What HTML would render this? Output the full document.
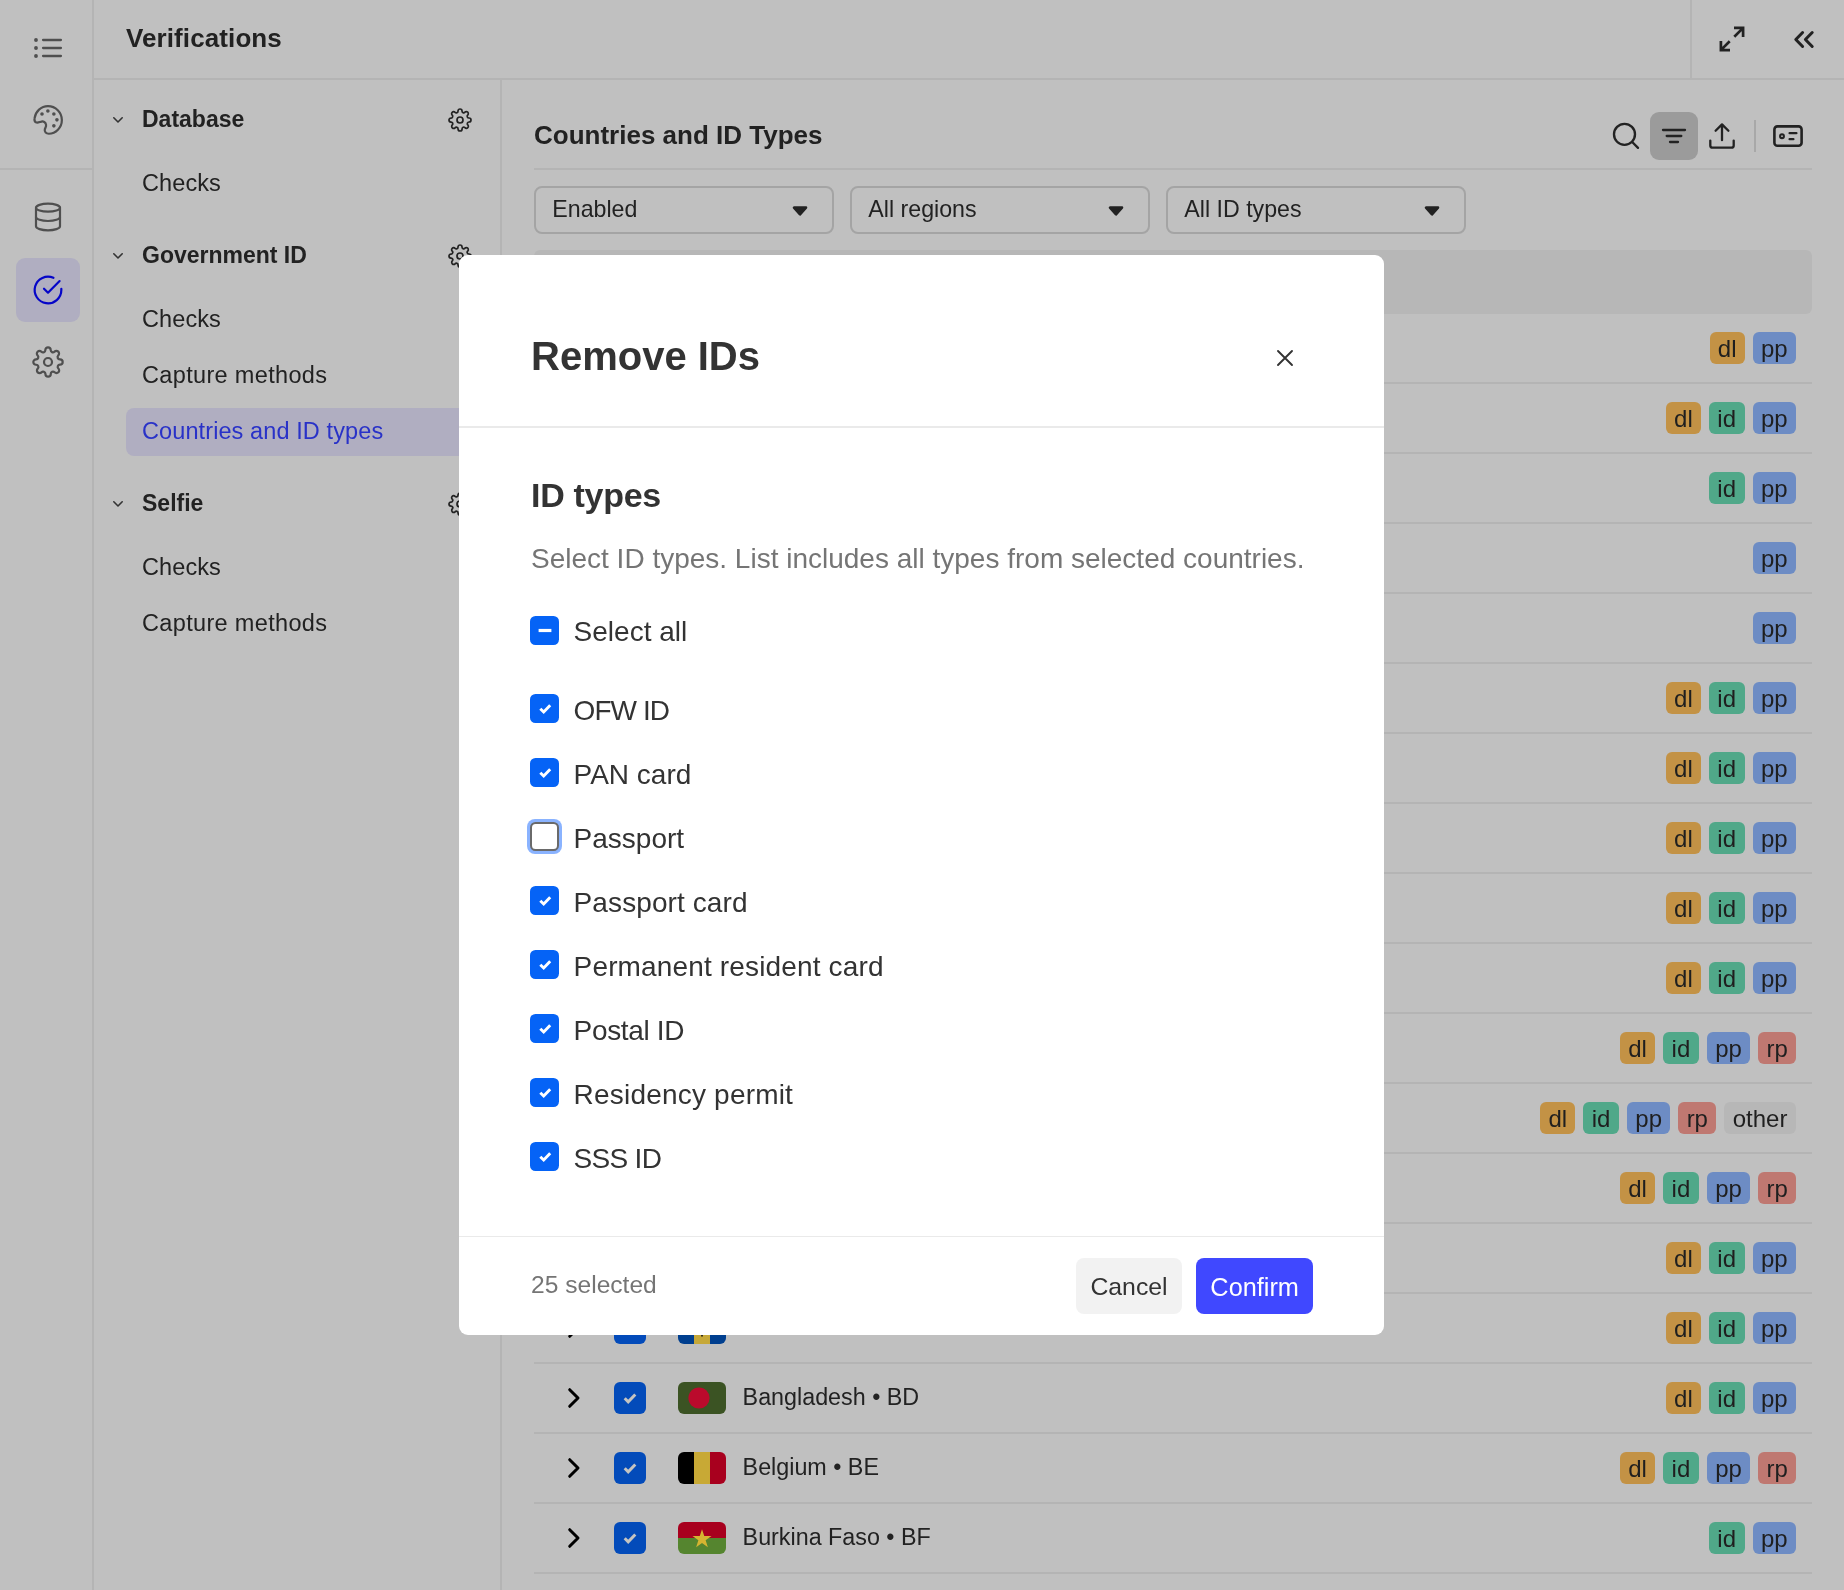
<!DOCTYPE html>
<html lang="en">
<head>
<meta charset="utf-8">
<title>Verifications</title>
<style>
*{box-sizing:border-box;margin:0;padding:0}
html,body{width:1844px;height:1590px;overflow:hidden;background:#c0c0c0}
body{font-family:"Liberation Sans",sans-serif;color:#222;position:relative}
#app{position:absolute;left:0;top:0;width:1844px;height:1590px;overflow:hidden;will-change:transform}
.abs{position:absolute}
.ln{position:absolute;background:#b4b4b4}
svg{display:block;overflow:visible}
.ico{position:absolute;fill:none;stroke:#4f4f4f;stroke-width:1.65;stroke-linecap:round;stroke-linejoin:round}
.t{position:absolute;white-space:nowrap;line-height:1}
/* nav */
.navh{font-weight:700;font-size:23px;left:142px}
.navi{font-size:23.5px;left:142px}
.chev{position:absolute;left:113px;width:10px;height:6px;fill:none;stroke:#333;stroke-width:1.6;stroke-linecap:round;stroke-linejoin:round}
.gear{position:absolute;left:448px;width:24px;height:24px;fill:none;stroke:#222;stroke-width:1.7;stroke-linecap:round;stroke-linejoin:round}
/* table */
.row{position:absolute;left:534px;width:1278px;height:70px;border-bottom:2px solid #b4b4b4}
.row .rc{position:absolute;left:34px;top:24px;width:12px;height:20px;fill:none;stroke:#000;stroke-width:3;stroke-linecap:round;stroke-linejoin:round}
.row .cb{position:absolute;left:80px;top:18px;width:32px;height:32px;border-radius:6px;background:#034bba}
.row .cb svg{position:absolute;left:0;top:0;width:32px;height:32px;fill:none;stroke:#c5c4c1;stroke-width:3;stroke-linecap:butt;stroke-linejoin:miter}
.row .fl{position:absolute;left:144px;top:18px;width:48px;height:32px;border-radius:6px;overflow:hidden}
.row .nm{position:absolute;left:208.6px;top:20px;font-size:23.3px;line-height:26px;white-space:nowrap;color:#222}
.tags{position:absolute;right:16px;top:18px;height:32px;display:flex;gap:8px}
.tg{height:32px;border-radius:6px;font-size:24px;line-height:33px;text-align:center;color:#1f1f1f}
.dl{width:34.8px;background:#c39245}
.id{width:35.8px;background:#50a889}
.pp{width:43.4px;background:#6d8cc4}
.rp{width:37.8px;background:#bf7871}
.ot{width:71.8px;background:#b7b7b7}
/* dropdown */
.dd{position:absolute;top:186px;width:300px;height:48px;border:2px solid #a4a4a4;border-radius:8px}
.dd span{position:absolute;left:16.3px;top:7.5px;font-size:23.2px;line-height:26px;color:#222}
.dd svg{position:absolute;right:24px;top:17.8px;width:16px;height:10px;fill:#222;stroke:#222;stroke-width:2.6;stroke-linejoin:round}
/* modal */
#modal{position:absolute;left:459px;top:254.8px;width:925.2px;height:1080.1px;background:#fff;border-radius:9px}
.mcb{position:absolute;left:71.4px;width:28.6px;height:28.6px;border-radius:5.5px;background:#0563f6}
.mcb svg{position:absolute;left:.3px;top:.3px;width:28px;height:28px;fill:none;stroke:#fff;stroke-width:2.9;stroke-linecap:butt;stroke-linejoin:miter}
.ml{position:absolute;left:114.6px;font-size:28px;line-height:32px;color:#333;white-space:nowrap}
</style>
</head>
<body>
<div id="app">
<div id="rail">
<div class="ln" style="left:92px;top:0;width:2px;height:1590px"></div>
<div class="ln" style="left:0;top:168px;width:92px;height:2px"></div>
<svg class="ico" style="left:32px;top:32px;width:32px;height:32px;" viewBox="0 0 24 24"><path stroke-width="1.7" d="M8.3 6H21.7M8.3 12H21.7M8.3 18H21.7"/><g fill="#4f4f4f" stroke="none"><circle cx="3" cy="6" r="1.43"/><circle cx="3" cy="12" r="1.43"/><circle cx="3" cy="18" r="1.43"/></g></svg>
<svg class="ico" style="left:32px;top:104px;width:32px;height:32px;" viewBox="0 0 24 24"><path d="M12 1.6C17.7 1.6 22.4 6.3 22.4 12C22.4 17.7 17.8 22.3 12.6 22.3C10.6 22.3 9.2 21 9.6 19.2C9.9 17.8 10.9 16.9 10.5 15.3C10.1 13.6 8.6 12.8 7 13.2C5.6 13.5 4.2 14.4 2.9 13.7C1.9 13.1 1.7 12 1.9 10.8C2.6 5.6 6.8 1.6 12 1.6Z"/><g fill="#4f4f4f" stroke="none"><circle cx="7.5" cy="7.5" r="1.35"/><circle cx="11.9" cy="5.2" r="1.35"/><circle cx="16.4" cy="7.5" r="1.35"/><circle cx="18.7" cy="11.9" r="1.35"/><circle cx="16.4" cy="16.4" r="1.35"/></g></svg>
<svg class="ico" style="left:32px;top:201px;width:32px;height:32px;" viewBox="0 0 24 24"><ellipse cx="12" cy="5" rx="9" ry="3"/><path d="M21 12c0 1.66-4 3-9 3s-9-1.34-9-3"/><path d="M3 5v14c0 1.66 4 3 9 3s9-1.34 9-3V5"/></svg>
<div class="abs" style="left:16px;top:258px;width:64px;height:64px;border-radius:9px;background:#b0aec1"></div>
<svg class="ico" style="left:32px;top:274px;width:32px;height:32px;stroke:#0505c8" viewBox="0 0 24 24"><path d="M22 11.08V12a10 10 0 1 1-5.93-9.14"/><polyline points="20.7 5.3 12 14.01 9 11.01"/></svg>
<svg class="ico" style="left:32px;top:346px;width:32px;height:32px;" viewBox="0 0 24 24"><circle cx="12" cy="12" r="3"/><path d="M19.4 15a1.65 1.65 0 0 0 .33 1.82l.06.06a2 2 0 0 1 0 2.83 2 2 0 0 1-2.83 0l-.06-.06a1.65 1.65 0 0 0-1.82-.33 1.65 1.65 0 0 0-1 1.51V21a2 2 0 0 1-2 2 2 2 0 0 1-2-2v-.09A1.65 1.65 0 0 0 9 19.4a1.65 1.65 0 0 0-1.82.33l-.06.06a2 2 0 0 1-2.83 0 2 2 0 0 1 0-2.83l.06-.06a1.65 1.65 0 0 0 .33-1.82 1.65 1.65 0 0 0-1.51-1H3a2 2 0 0 1-2-2 2 2 0 0 1 2-2h.09A1.65 1.65 0 0 0 4.6 9a1.65 1.65 0 0 0-.33-1.82l-.06-.06a2 2 0 0 1 0-2.83 2 2 0 0 1 2.83 0l.06.06a1.65 1.65 0 0 0 1.82.33H9a1.65 1.65 0 0 0 1-1.51V3a2 2 0 0 1 2-2 2 2 0 0 1 2 2v.09a1.65 1.65 0 0 0 1 1.51 1.65 1.65 0 0 0 1.82-.33l.06-.06a2 2 0 0 1 2.83 0 2 2 0 0 1 0 2.83l-.06.06a1.65 1.65 0 0 0-.33 1.82V9a1.65 1.65 0 0 0 1.51 1H21a2 2 0 0 1 2 2 2 2 0 0 1-2 2h-.09a1.65 1.65 0 0 0-1.51 1z"/></svg>
</div>
<div id="hdr">
<div class="ln" style="left:94px;top:78px;width:1750px;height:2px"></div>
<div class="ln" style="left:1690px;top:0;width:2px;height:78px"></div>
<div class="t" style="left:126px;top:24.59px;font-size:26px;font-weight:700;letter-spacing:.1px">Verifications</div>
<svg class="abs" style="left:1719px;top:26px;width:26px;height:26px;fill:none;stroke:#222;stroke-width:2.7;stroke-linecap:butt;stroke-linejoin:miter" viewBox="0 0 26 26"><path d="M15 1.9H24.1V11M23.9 2.1L15.3 10.7M11 24.1H1.9V15M2.1 23.9L10.7 15.3"/></svg>
<svg class="abs" style="left:1794px;top:31px;width:20px;height:17px;fill:none;stroke:#222;stroke-width:3;stroke-linecap:round;stroke-linejoin:round" viewBox="0 0 20 17"><path d="M8.6 1.5L1.8 8.5L8.6 15.5M18.2 1.5L11.4 8.5L18.2 15.5"/></svg>
</div>
<div id="nav">
<div class="ln" style="left:500px;top:80px;width:2px;height:1510px"></div>
<svg class="chev" style="top:116.5px" viewBox="0 0 10 6"><path d="M.8 .8L5 5L9.2 .8"/></svg>
<div class="t navh" style="top:107.93px">Database</div>
<svg class="gear" style="top:108px" viewBox="0 0 24 24"><circle cx="12" cy="12" r="3"/><path d="M19.4 15a1.65 1.65 0 0 0 .33 1.82l.06.06a2 2 0 0 1 0 2.83 2 2 0 0 1-2.83 0l-.06-.06a1.65 1.65 0 0 0-1.82-.33 1.65 1.65 0 0 0-1 1.51V21a2 2 0 0 1-2 2 2 2 0 0 1-2-2v-.09A1.65 1.65 0 0 0 9 19.4a1.65 1.65 0 0 0-1.82.33l-.06.06a2 2 0 0 1-2.83 0 2 2 0 0 1 0-2.83l.06-.06a1.65 1.65 0 0 0 .33-1.82 1.65 1.65 0 0 0-1.51-1H3a2 2 0 0 1-2-2 2 2 0 0 1 2-2h.09A1.65 1.65 0 0 0 4.6 9a1.65 1.65 0 0 0-.33-1.82l-.06-.06a2 2 0 0 1 0-2.83 2 2 0 0 1 2.83 0l.06.06a1.65 1.65 0 0 0 1.82.33H9a1.65 1.65 0 0 0 1-1.51V3a2 2 0 0 1 2-2 2 2 0 0 1 2 2v.09a1.65 1.65 0 0 0 1 1.51 1.65 1.65 0 0 0 1.82-.33l.06-.06a2 2 0 0 1 2.83 0 2 2 0 0 1 0 2.83l-.06.06a1.65 1.65 0 0 0-.33 1.82V9a1.65 1.65 0 0 0 1.51 1H21a2 2 0 0 1 2 2 2 2 0 0 1-2 2h-.09a1.65 1.65 0 0 0-1.51 1z"/></svg>
<div class="t navi" style="top:172.01px;letter-spacing:.1px;">Checks</div>
<svg class="chev" style="top:252.5px" viewBox="0 0 10 6"><path d="M.8 .8L5 5L9.2 .8"/></svg>
<div class="t navh" style="top:243.93px">Government ID</div>
<svg class="gear" style="top:244px" viewBox="0 0 24 24"><circle cx="12" cy="12" r="3"/><path d="M19.4 15a1.65 1.65 0 0 0 .33 1.82l.06.06a2 2 0 0 1 0 2.83 2 2 0 0 1-2.83 0l-.06-.06a1.65 1.65 0 0 0-1.82-.33 1.65 1.65 0 0 0-1 1.51V21a2 2 0 0 1-2 2 2 2 0 0 1-2-2v-.09A1.65 1.65 0 0 0 9 19.4a1.65 1.65 0 0 0-1.82.33l-.06.06a2 2 0 0 1-2.83 0 2 2 0 0 1 0-2.83l.06-.06a1.65 1.65 0 0 0 .33-1.82 1.65 1.65 0 0 0-1.51-1H3a2 2 0 0 1-2-2 2 2 0 0 1 2-2h.09A1.65 1.65 0 0 0 4.6 9a1.65 1.65 0 0 0-.33-1.82l-.06-.06a2 2 0 0 1 0-2.83 2 2 0 0 1 2.83 0l.06.06a1.65 1.65 0 0 0 1.82.33H9a1.65 1.65 0 0 0 1-1.51V3a2 2 0 0 1 2-2 2 2 0 0 1 2 2v.09a1.65 1.65 0 0 0 1 1.51 1.65 1.65 0 0 0 1.82-.33l.06-.06a2 2 0 0 1 2.83 0 2 2 0 0 1 0 2.83l-.06.06a1.65 1.65 0 0 0-.33 1.82V9a1.65 1.65 0 0 0 1.51 1H21a2 2 0 0 1 2 2 2 2 0 0 1-2 2h-.09a1.65 1.65 0 0 0-1.51 1z"/></svg>
<div class="t navi" style="top:308.01px;letter-spacing:.1px;">Checks</div>
<div class="t navi" style="top:364.01px;letter-spacing:.34px;">Capture methods</div>
<div class="abs" style="left:126px;top:408px;width:358px;height:48px;border-radius:8px;background:#b0aec1"></div>
<div class="t navi" style="top:420.01px;color:#2932c8;letter-spacing:.1px;">Countries and ID types</div>
<svg class="chev" style="top:500.5px" viewBox="0 0 10 6"><path d="M.8 .8L5 5L9.2 .8"/></svg>
<div class="t navh" style="top:491.93px">Selfie</div>
<svg class="gear" style="top:492px" viewBox="0 0 24 24"><circle cx="12" cy="12" r="3"/><path d="M19.4 15a1.65 1.65 0 0 0 .33 1.82l.06.06a2 2 0 0 1 0 2.83 2 2 0 0 1-2.83 0l-.06-.06a1.65 1.65 0 0 0-1.82-.33 1.65 1.65 0 0 0-1 1.51V21a2 2 0 0 1-2 2 2 2 0 0 1-2-2v-.09A1.65 1.65 0 0 0 9 19.4a1.65 1.65 0 0 0-1.82.33l-.06.06a2 2 0 0 1-2.83 0 2 2 0 0 1 0-2.83l.06-.06a1.65 1.65 0 0 0 .33-1.82 1.65 1.65 0 0 0-1.51-1H3a2 2 0 0 1-2-2 2 2 0 0 1 2-2h.09A1.65 1.65 0 0 0 4.6 9a1.65 1.65 0 0 0-.33-1.82l-.06-.06a2 2 0 0 1 0-2.83 2 2 0 0 1 2.83 0l.06.06a1.65 1.65 0 0 0 1.82.33H9a1.65 1.65 0 0 0 1-1.51V3a2 2 0 0 1 2-2 2 2 0 0 1 2 2v.09a1.65 1.65 0 0 0 1 1.51 1.65 1.65 0 0 0 1.82-.33l.06-.06a2 2 0 0 1 2.83 0 2 2 0 0 1 0 2.83l-.06.06a1.65 1.65 0 0 0-.33 1.82V9a1.65 1.65 0 0 0 1.51 1H21a2 2 0 0 1 2 2 2 2 0 0 1-2 2h-.09a1.65 1.65 0 0 0-1.51 1z"/></svg>
<div class="t navi" style="top:556.01px;letter-spacing:.1px;">Checks</div>
<div class="t navi" style="top:612.01px;letter-spacing:.34px;">Capture methods</div>
</div>
<div id="main">
<div class="t" style="left:534px;top:122.49px;font-size:26px;font-weight:700">Countries and ID Types</div>
<div class="ln" style="left:534px;top:168px;width:1278px;height:2px"></div>
<svg class="abs" style="left:1610px;top:120px;width:32px;height:32px;fill:none;stroke:#222;stroke-width:2.35;stroke-linecap:round" viewBox="0 0 32 32"><circle cx="14.5" cy="14.3" r="10.5"/><path d="M22.2 22L28 27.8"/></svg>
<div class="abs" style="left:1650px;top:112px;width:48px;height:48px;border-radius:9px;background:#9b9b9b"></div>
<svg class="abs" style="left:1650px;top:112px;width:48px;height:48px;fill:none;stroke:#222;stroke-width:2.3;stroke-linecap:round" viewBox="0 0 48 48"><path d="M13 18H35M16.7 24H31.3M20 30H28"/></svg>
<svg class="abs" style="left:1706px;top:120px;width:32px;height:32px;fill:none;stroke:#222;stroke-width:2.3;stroke-linecap:round;stroke-linejoin:round" viewBox="0 0 32 32"><path d="M16 20.2V4.6M9.6 10.8L16 4.4L22.4 10.8M4.3 20.6V25.4Q4.3 27.6 6.5 27.6H25.5Q27.7 27.6 27.7 25.4V20.6"/></svg>
<div class="ln" style="left:1754px;top:120px;width:2px;height:32px;background:#a8a8a8"></div>
<svg class="abs" style="left:1772px;top:120px;width:32px;height:32px;fill:none;stroke:#222;stroke-width:2.6;stroke-linecap:round;stroke-linejoin:round" viewBox="0 0 32 32"><rect x="2.4" y="6.4" width="27.2" height="19.4" rx="3"/><circle cx="10" cy="16.2" r="1.9" stroke-width="2.1"/><path stroke-width="2.3" d="M17.6 13.2H24.4M17.6 19.2H21.4"/></svg>
<div class="dd" style="left:534px"><span>Enabled</span><svg viewBox="0 0 16 10"><path d="M2 1.6H14L8 8.4Z"/></svg></div>
<div class="dd" style="left:850px"><span>All regions</span><svg viewBox="0 0 16 10"><path d="M2 1.6H14L8 8.4Z"/></svg></div>
<div class="dd" style="left:1166px"><span>All ID types</span><svg viewBox="0 0 16 10"><path d="M2 1.6H14L8 8.4Z"/></svg></div>
<div class="abs" style="left:534px;top:250px;width:1278px;height:64px;border-radius:6px;background:#b7b7b7"></div>
<div class="row" style="top:314px"><svg class="rc" viewBox="0 0 12 20"><path d="M1.7 1.7L10 10L1.7 18.3"/></svg><div class="cb"><svg viewBox="0 0 32 32"><path d="M10.7 16.3L14.2 19.9L21.3 12.5"/></svg></div><div class="fl"><svg viewBox="0 0 48 32" width="48" height="32"><rect width="48" height="32" fill="#6d7f99"/></svg></div><div class="nm">Andorra • AD</div><div class="tags"><span class="tg dl">dl</span><span class="tg pp">pp</span></div></div>
<div class="row" style="top:384px"><svg class="rc" viewBox="0 0 12 20"><path d="M1.7 1.7L10 10L1.7 18.3"/></svg><div class="cb"><svg viewBox="0 0 32 32"><path d="M10.7 16.3L14.2 19.9L21.3 12.5"/></svg></div><div class="fl"><svg viewBox="0 0 48 32" width="48" height="32"><rect width="48" height="32" fill="#6d7f99"/></svg></div><div class="nm">United Arab Emirates • AE</div><div class="tags"><span class="tg dl">dl</span><span class="tg id">id</span><span class="tg pp">pp</span></div></div>
<div class="row" style="top:454px"><svg class="rc" viewBox="0 0 12 20"><path d="M1.7 1.7L10 10L1.7 18.3"/></svg><div class="cb"><svg viewBox="0 0 32 32"><path d="M10.7 16.3L14.2 19.9L21.3 12.5"/></svg></div><div class="fl"><svg viewBox="0 0 48 32" width="48" height="32"><rect width="48" height="32" fill="#6d7f99"/></svg></div><div class="nm">Afghanistan • AF</div><div class="tags"><span class="tg id">id</span><span class="tg pp">pp</span></div></div>
<div class="row" style="top:524px"><svg class="rc" viewBox="0 0 12 20"><path d="M1.7 1.7L10 10L1.7 18.3"/></svg><div class="cb"><svg viewBox="0 0 32 32"><path d="M10.7 16.3L14.2 19.9L21.3 12.5"/></svg></div><div class="fl"><svg viewBox="0 0 48 32" width="48" height="32"><rect width="48" height="32" fill="#6d7f99"/></svg></div><div class="nm">Antigua and Barbuda • AG</div><div class="tags"><span class="tg pp">pp</span></div></div>
<div class="row" style="top:594px"><svg class="rc" viewBox="0 0 12 20"><path d="M1.7 1.7L10 10L1.7 18.3"/></svg><div class="cb"><svg viewBox="0 0 32 32"><path d="M10.7 16.3L14.2 19.9L21.3 12.5"/></svg></div><div class="fl"><svg viewBox="0 0 48 32" width="48" height="32"><rect width="48" height="32" fill="#6d7f99"/></svg></div><div class="nm">Anguilla • AI</div><div class="tags"><span class="tg pp">pp</span></div></div>
<div class="row" style="top:664px"><svg class="rc" viewBox="0 0 12 20"><path d="M1.7 1.7L10 10L1.7 18.3"/></svg><div class="cb"><svg viewBox="0 0 32 32"><path d="M10.7 16.3L14.2 19.9L21.3 12.5"/></svg></div><div class="fl"><svg viewBox="0 0 48 32" width="48" height="32"><rect width="48" height="32" fill="#6d7f99"/></svg></div><div class="nm">Albania • AL</div><div class="tags"><span class="tg dl">dl</span><span class="tg id">id</span><span class="tg pp">pp</span></div></div>
<div class="row" style="top:734px"><svg class="rc" viewBox="0 0 12 20"><path d="M1.7 1.7L10 10L1.7 18.3"/></svg><div class="cb"><svg viewBox="0 0 32 32"><path d="M10.7 16.3L14.2 19.9L21.3 12.5"/></svg></div><div class="fl"><svg viewBox="0 0 48 32" width="48" height="32"><rect width="48" height="32" fill="#6d7f99"/></svg></div><div class="nm">Armenia • AM</div><div class="tags"><span class="tg dl">dl</span><span class="tg id">id</span><span class="tg pp">pp</span></div></div>
<div class="row" style="top:804px"><svg class="rc" viewBox="0 0 12 20"><path d="M1.7 1.7L10 10L1.7 18.3"/></svg><div class="cb"><svg viewBox="0 0 32 32"><path d="M10.7 16.3L14.2 19.9L21.3 12.5"/></svg></div><div class="fl"><svg viewBox="0 0 48 32" width="48" height="32"><rect width="48" height="32" fill="#6d7f99"/></svg></div><div class="nm">Angola • AO</div><div class="tags"><span class="tg dl">dl</span><span class="tg id">id</span><span class="tg pp">pp</span></div></div>
<div class="row" style="top:874px"><svg class="rc" viewBox="0 0 12 20"><path d="M1.7 1.7L10 10L1.7 18.3"/></svg><div class="cb"><svg viewBox="0 0 32 32"><path d="M10.7 16.3L14.2 19.9L21.3 12.5"/></svg></div><div class="fl"><svg viewBox="0 0 48 32" width="48" height="32"><rect width="48" height="32" fill="#6d7f99"/></svg></div><div class="nm">Argentina • AR</div><div class="tags"><span class="tg dl">dl</span><span class="tg id">id</span><span class="tg pp">pp</span></div></div>
<div class="row" style="top:944px"><svg class="rc" viewBox="0 0 12 20"><path d="M1.7 1.7L10 10L1.7 18.3"/></svg><div class="cb"><svg viewBox="0 0 32 32"><path d="M10.7 16.3L14.2 19.9L21.3 12.5"/></svg></div><div class="fl"><svg viewBox="0 0 48 32" width="48" height="32"><rect width="48" height="32" fill="#6d7f99"/></svg></div><div class="nm">American Samoa • AS</div><div class="tags"><span class="tg dl">dl</span><span class="tg id">id</span><span class="tg pp">pp</span></div></div>
<div class="row" style="top:1014px"><svg class="rc" viewBox="0 0 12 20"><path d="M1.7 1.7L10 10L1.7 18.3"/></svg><div class="cb"><svg viewBox="0 0 32 32"><path d="M10.7 16.3L14.2 19.9L21.3 12.5"/></svg></div><div class="fl"><svg viewBox="0 0 48 32" width="48" height="32"><rect width="48" height="32" fill="#6d7f99"/></svg></div><div class="nm">Austria • AT</div><div class="tags"><span class="tg dl">dl</span><span class="tg id">id</span><span class="tg pp">pp</span><span class="tg rp">rp</span></div></div>
<div class="row" style="top:1084px"><svg class="rc" viewBox="0 0 12 20"><path d="M1.7 1.7L10 10L1.7 18.3"/></svg><div class="cb"><svg viewBox="0 0 32 32"><path d="M10.7 16.3L14.2 19.9L21.3 12.5"/></svg></div><div class="fl"><svg viewBox="0 0 48 32" width="48" height="32"><rect width="48" height="32" fill="#6d7f99"/></svg></div><div class="nm">Australia • AU</div><div class="tags"><span class="tg dl">dl</span><span class="tg id">id</span><span class="tg pp">pp</span><span class="tg rp">rp</span><span class="tg ot">other</span></div></div>
<div class="row" style="top:1154px"><svg class="rc" viewBox="0 0 12 20"><path d="M1.7 1.7L10 10L1.7 18.3"/></svg><div class="cb"><svg viewBox="0 0 32 32"><path d="M10.7 16.3L14.2 19.9L21.3 12.5"/></svg></div><div class="fl"><svg viewBox="0 0 48 32" width="48" height="32"><rect width="48" height="32" fill="#6d7f99"/></svg></div><div class="nm">Azerbaijan • AZ</div><div class="tags"><span class="tg dl">dl</span><span class="tg id">id</span><span class="tg pp">pp</span><span class="tg rp">rp</span></div></div>
<div class="row" style="top:1224px"><svg class="rc" viewBox="0 0 12 20"><path d="M1.7 1.7L10 10L1.7 18.3"/></svg><div class="cb"><svg viewBox="0 0 32 32"><path d="M10.7 16.3L14.2 19.9L21.3 12.5"/></svg></div><div class="fl"><svg viewBox="0 0 48 32" width="48" height="32"><rect width="48" height="32" fill="#6d7f99"/></svg></div><div class="nm">Bosnia and Herzegovina • BA</div><div class="tags"><span class="tg dl">dl</span><span class="tg id">id</span><span class="tg pp">pp</span></div></div>
<div class="row" style="top:1294px"><svg class="rc" viewBox="0 0 12 20"><path d="M1.7 1.7L10 10L1.7 18.3"/></svg><div class="cb"><svg viewBox="0 0 32 32"><path d="M10.7 16.3L14.2 19.9L21.3 12.5"/></svg></div><div class="fl"><svg viewBox="0 0 48 32" width="48" height="32"><rect width="48" height="32" fill="#003f8f"/><rect x="16" width="16" height="32" fill="#c6a838"/><path d="M24 8v16.6M20.5 11q0 7.5 3.5 7.5q3.5 0 3.5-7.5" stroke="#111" stroke-width="1.6" fill="none"/></svg></div><div class="nm">Barbados • BB</div><div class="tags"><span class="tg dl">dl</span><span class="tg id">id</span><span class="tg pp">pp</span></div></div>
<div class="row" style="top:1364px"><svg class="rc" viewBox="0 0 12 20"><path d="M1.7 1.7L10 10L1.7 18.3"/></svg><div class="cb"><svg viewBox="0 0 32 32"><path d="M10.7 16.3L14.2 19.9L21.3 12.5"/></svg></div><div class="fl"><svg viewBox="0 0 48 32" width="48" height="32"><rect width="48" height="32" fill="#3b5323"/><circle cx="21" cy="16" r="10.6" fill="#bb0a2c"/></svg></div><div class="nm">Bangladesh • BD</div><div class="tags"><span class="tg dl">dl</span><span class="tg id">id</span><span class="tg pp">pp</span></div></div>
<div class="row" style="top:1434px"><svg class="rc" viewBox="0 0 12 20"><path d="M1.7 1.7L10 10L1.7 18.3"/></svg><div class="cb"><svg viewBox="0 0 32 32"><path d="M10.7 16.3L14.2 19.9L21.3 12.5"/></svg></div><div class="fl"><svg viewBox="0 0 48 32" width="48" height="32"><rect width="16" height="32" fill="#000"/><rect x="16" width="16" height="32" fill="#c8a935"/><rect x="32" width="16" height="32" fill="#a8001e"/></svg></div><div class="nm">Belgium • BE</div><div class="tags"><span class="tg dl">dl</span><span class="tg id">id</span><span class="tg pp">pp</span><span class="tg rp">rp</span></div></div>
<div class="row" style="top:1504px"><svg class="rc" viewBox="0 0 12 20"><path d="M1.7 1.7L10 10L1.7 18.3"/></svg><div class="cb"><svg viewBox="0 0 32 32"><path d="M10.7 16.3L14.2 19.9L21.3 12.5"/></svg></div><div class="fl"><svg viewBox="0 0 48 32" width="48" height="32"><rect width="48" height="16" fill="#a8001e"/><rect y="16" width="48" height="16" fill="#55852f"/><path d="M24 7.2l2.25 6.9h7.25l-5.87 4.26 2.24 6.9L24 21l-5.87 4.26 2.24-6.9L14.5 14.1h7.25z" fill="#d6b431"/></svg></div><div class="nm">Burkina Faso • BF</div><div class="tags"><span class="tg id">id</span><span class="tg pp">pp</span></div></div>
<div class="row" style="top:1574px"><svg class="rc" viewBox="0 0 12 20"><path d="M1.7 1.7L10 10L1.7 18.3"/></svg><div class="cb"><svg viewBox="0 0 32 32"><path d="M10.7 16.3L14.2 19.9L21.3 12.5"/></svg></div><div class="fl"><svg viewBox="0 0 48 32" width="48" height="32"><rect width="48" height="32" fill="#6d7f99"/></svg></div><div class="nm">Bulgaria • BG</div><div class="tags"><span class="tg dl">dl</span><span class="tg id">id</span><span class="tg pp">pp</span></div></div>
</div>
<div id="modal">
<div class="t" style="left:72px;top:81.64px;font-size:40px;font-weight:700;color:#333">Remove IDs</div>
<svg class="abs" style="left:818px;top:95px;width:16px;height:16px;fill:none;stroke:#333;stroke-width:1.9;stroke-linecap:round" viewBox="0 0 16 16"><path d="M1 1L15 15M15 1L1 15"/></svg>
<div class="abs" style="left:0;top:171.3px;width:925.2px;height:1.6px;background:#eaeaea"></div>
<div class="t" style="left:72px;top:223.22px;font-size:34px;font-weight:700;letter-spacing:-.3px;color:#333">ID types</div>
<div class="t" style="left:72px;top:290.3px;font-size:28px;color:#757575">Select ID types. List includes all types from selected countries.</div>
<div class="mcb" style="top:361.2px"><svg viewBox="0 0 28 28"><path stroke-width="3.2" d="M7.6 14.5H20.4"/></svg></div>
<div class="ml" style="top:361px;">Select all</div>
<div class="mcb" style="top:439.3px"><svg viewBox="0 0 28 28"><path d="M9.3 14.7L12.7 18L19.2 11.2"/></svg></div>
<div class="ml" style="top:440px;letter-spacing:-.95px">OFW ID</div>
<div class="mcb" style="top:503.3px"><svg viewBox="0 0 28 28"><path d="M9.3 14.7L12.7 18L19.2 11.2"/></svg></div>
<div class="ml" style="top:504px;">PAN card</div>
<div class="abs" style="left:68.2px;top:564.1px;width:34.8px;height:35.2px;border-radius:8px;background:#8ab3ff"></div>
<div class="abs" style="left:71.3px;top:567.3px;width:28.7px;height:28.8px;border-radius:5.5px;background:#fff;border:2.3px solid #6a6a6a"></div>
<div class="ml" style="top:568px;">Passport</div>
<div class="mcb" style="top:631.4px"><svg viewBox="0 0 28 28"><path d="M9.3 14.7L12.7 18L19.2 11.2"/></svg></div>
<div class="ml" style="top:632px;letter-spacing:.1px">Passport card</div>
<div class="mcb" style="top:695.4px"><svg viewBox="0 0 28 28"><path d="M9.3 14.7L12.7 18L19.2 11.2"/></svg></div>
<div class="ml" style="top:696px;letter-spacing:.15px">Permanent resident card</div>
<div class="mcb" style="top:759.4px"><svg viewBox="0 0 28 28"><path d="M9.3 14.7L12.7 18L19.2 11.2"/></svg></div>
<div class="ml" style="top:760px;letter-spacing:-.35px">Postal ID</div>
<div class="mcb" style="top:823.4px"><svg viewBox="0 0 28 28"><path d="M9.3 14.7L12.7 18L19.2 11.2"/></svg></div>
<div class="ml" style="top:824px;letter-spacing:.2px">Residency permit</div>
<div class="mcb" style="top:887.4px"><svg viewBox="0 0 28 28"><path d="M9.3 14.7L12.7 18L19.2 11.2"/></svg></div>
<div class="ml" style="top:888px;letter-spacing:-.7px">SSS ID</div>
<div class="abs" style="left:0;top:981px;width:925.2px;height:1.6px;background:#eaeaea"></div>
<div class="t" style="left:72px;top:1018.18px;font-size:24.6px;color:#757575">25 selected</div>
<div class="abs" style="left:617px;top:1002.8px;width:106px;height:56.9px;border-radius:8px;background:#f2f2f2;text-align:center;font-size:24.8px;line-height:58px;color:#333">Cancel</div>
<div class="abs" style="left:737px;top:1002.8px;width:117.3px;height:56.9px;border-radius:8px;background:#4048ff;text-align:center;font-size:25.3px;line-height:58px;color:#fff">Confirm</div>
</div>
</div>
</body>
</html>
